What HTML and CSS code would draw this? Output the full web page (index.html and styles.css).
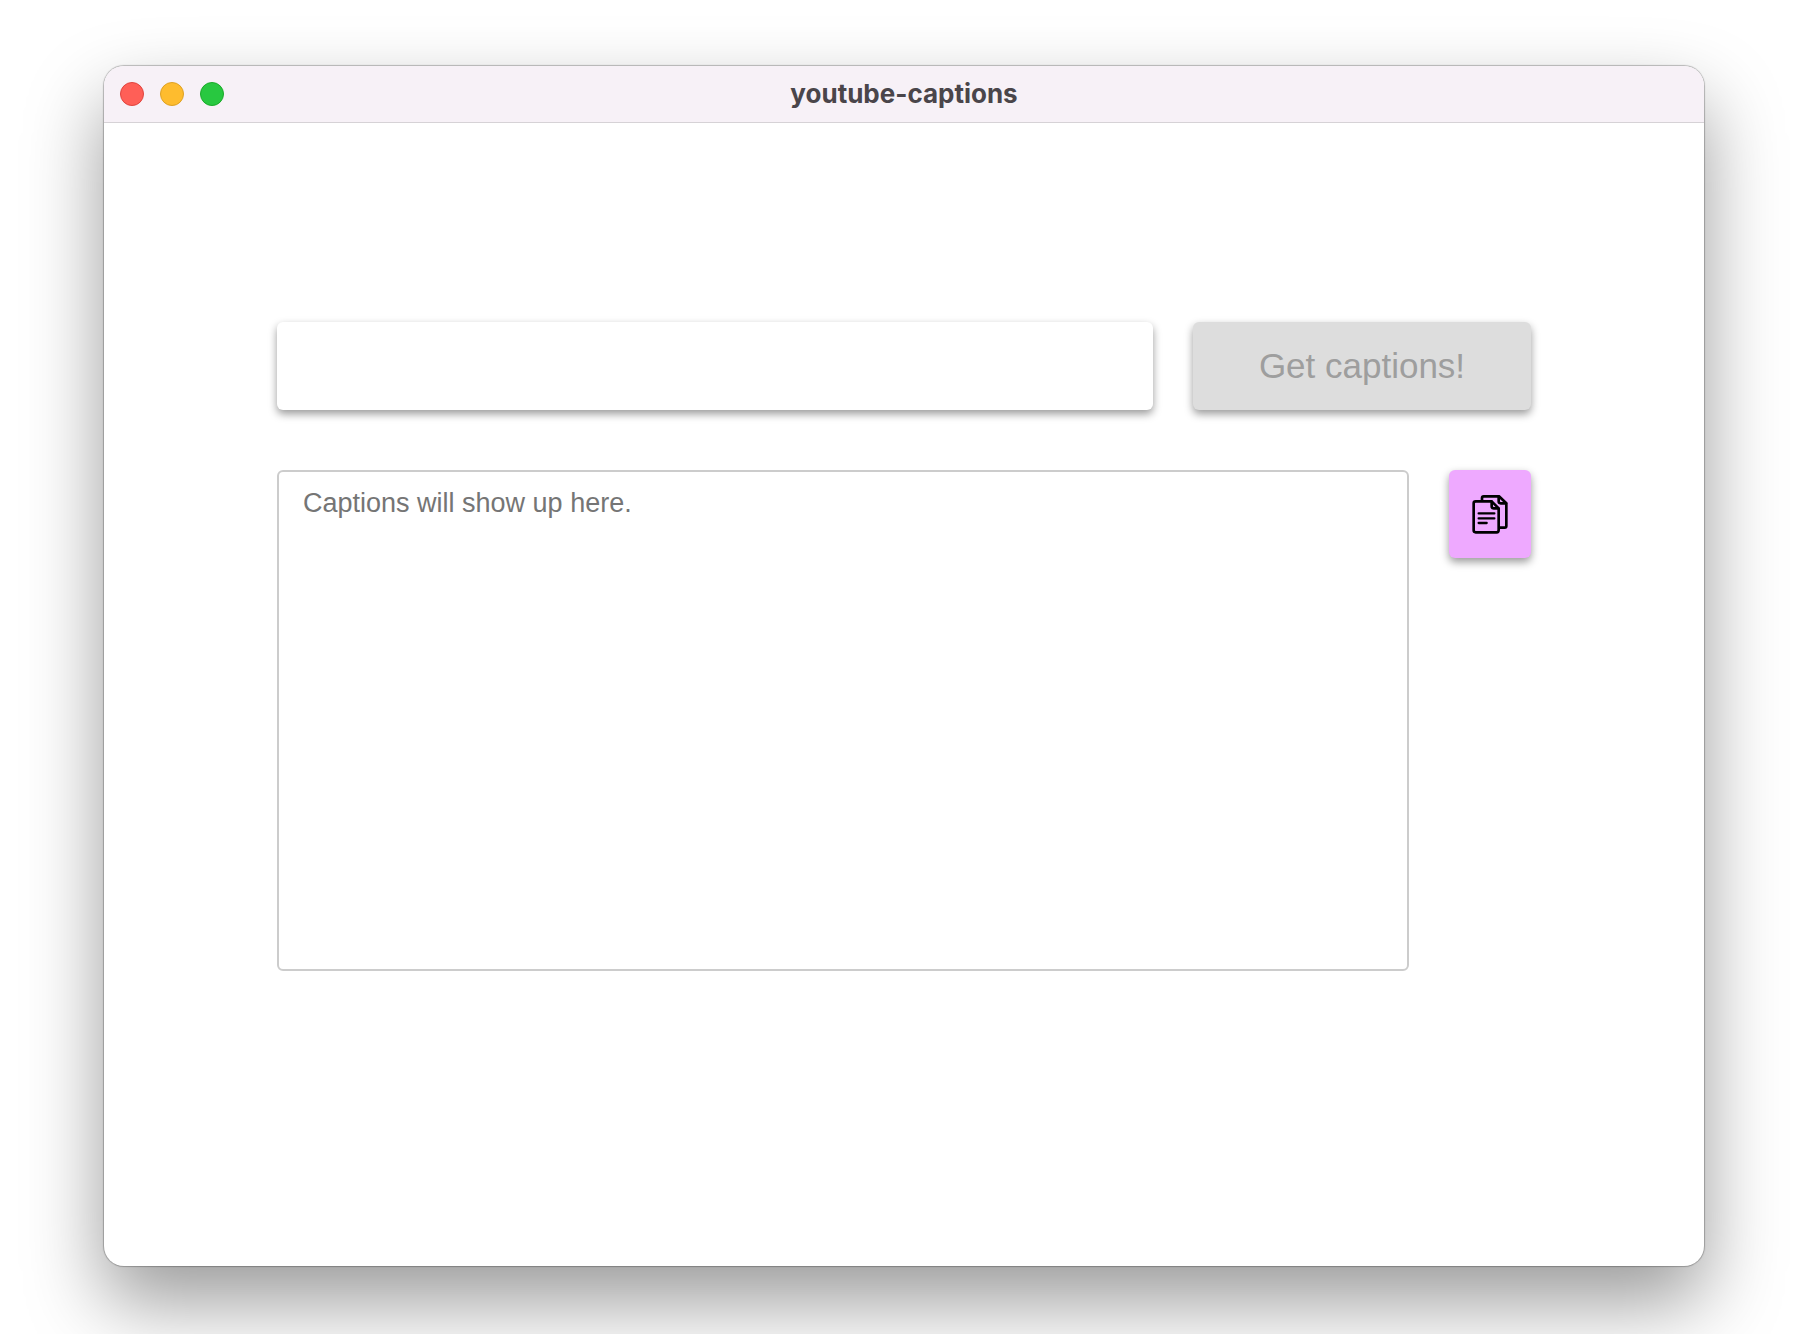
FILE: index.html
```html
<!DOCTYPE html>
<html lang="en">
<head>
<meta charset="utf-8">
<title>youtube-captions</title>
<link rel="stylesheet" href="styles.css">
</head>
<body>
<div class="window">
  <header class="titlebar">
    <div class="controls">
      <button class="dot dot-close" type="button" aria-label="Close"></button>
      <button class="dot dot-minimize" type="button" aria-label="Minimize"></button>
      <button class="dot dot-zoom" type="button" aria-label="Zoom"></button>
    </div>
    <h1 class="title">youtube-captions</h1>
  </header>
  <main class="content">
    <form class="row">
      <input class="url" type="text" aria-label="Video URL">
      <button class="submit" type="submit" disabled>Get captions!</button>
    </form>
    <div class="row">
      <textarea class="captions" aria-label="Captions" placeholder="Captions will show up here." readonly></textarea>
      <button class="copy" type="button" aria-label="Copy captions">
        <svg class="copy-icon" viewBox="0 0 108 120" fill="none" stroke="#000" stroke-width="8" stroke-linejoin="round" stroke-linecap="round" aria-hidden="true">
          <path d="M30 18V12Q30 7 35 7H81L103 28V96Q103 101 98 101H82"/>
          <path d="M80 8V22Q80 28 86 28H102"/>
          <path d="M11 22H59L80 43V108Q80 115 74 115H11Q5 115 5 109V28Q5 22 11 22Z"/>
          <path d="M59 23V37Q59 43 65 43H79"/>
          <path d="M20 58H67M20 73H67M20 87H44" stroke-width="7"/>
        </svg>
      </button>
    </div>
  </main>
</div>
</body>
</html>
```
FILE: styles.css
```css
* {
  box-sizing: border-box;
}

body {
  margin: 0;
  min-height: 100vh;
  display: flex;
  padding: 66px 112px 68px 104px;
  background: #fff;
  font-family: "Liberation Sans", Arial, sans-serif;
}

.window {
  flex: 1;
  min-width: 0;
  border-radius: 20px;
  background: #fff;
  box-shadow: 0 0 1px 1px rgba(0, 0, 0, 0.25), 0 36px 78px rgba(0, 0, 0, 0.4);
}

.titlebar {
  display: grid;
  grid-template-columns: 1fr auto 1fr;
  align-items: center;
  height: 57px;
  padding: 0 16px;
  border-bottom: 1px solid #d6d2d6;
  border-radius: 20px 20px 0 0;
  background: #f7f1f7;
}

.controls {
  display: flex;
  gap: 16px;
}

.dot {
  width: 24px;
  height: 24px;
  padding: 0;
  border: 1px solid;
  border-radius: 50%;
}

.dot-close {
  background: #ff5f57;
  border-color: #e0443e;
}

.dot-minimize {
  background: #febc2e;
  border-color: #dea123;
}

.dot-zoom {
  background: #28c840;
  border-color: #1aab29;
}

.title {
  margin: 0;
  color: #4a454a;
  font: 700 26px/32px Inter, sans-serif;
}

.content {
  display: flex;
  flex-direction: column;
  gap: 60px;
  padding: 199px 173px;
}

.row {
  display: flex;
  align-items: flex-start;
  gap: 40px;
  margin: 0;
}

.url,
.submit,
.copy {
  height: 88px;
  border: 0;
  border-radius: 6px;
  box-shadow: 0 4px 8px rgba(0, 0, 0, 0.4);
}

.url {
  flex: 1;
  min-width: 0;
  padding: 0 24px;
  background: #fff;
  font: 35px "Liberation Sans", Arial, sans-serif;
}

.submit {
  width: 338px;
  background: #ddd;
  color: #9e9e9e;
  font: 35px "Liberation Sans", Arial, sans-serif;
}

.captions {
  flex: 1;
  min-width: 0;
  height: 501px;
  padding: 16px 24px;
  border: 2px solid #ccc;
  border-radius: 6px;
  background: #fff;
  font: 27px/30px "Liberation Sans", Arial, sans-serif;
  resize: none;
}

.captions::placeholder {
  color: #757575;
}

.copy {
  display: flex;
  align-items: center;
  justify-content: center;
  width: 82px;
  padding: 0;
  background: #eea9ff;
}

.copy-icon {
  width: 36px;
  height: 40px;
}
```
